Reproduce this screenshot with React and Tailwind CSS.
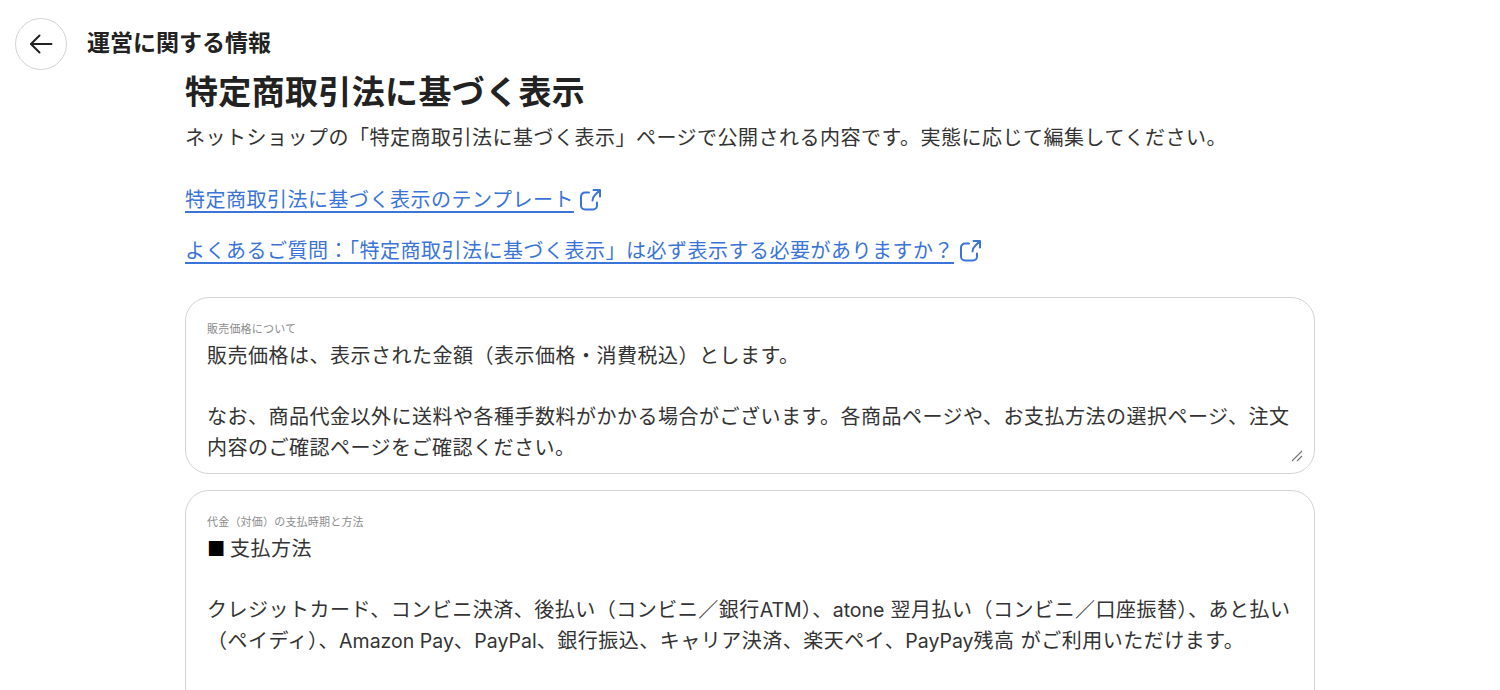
import React from 'react';

const BackArrow = () => (
  <svg width="24" height="20" viewBox="0 0 24 20" fill="none" stroke="currentColor" strokeWidth="2" strokeLinecap="round" strokeLinejoin="round">
    <path d="M22.5 10H2" />
    <path d="M10.5 1.5 2 10l8.5 8.5" />
  </svg>
);

const ExternalIcon = () => (
  <svg width="24" height="24" viewBox="0 0 24 24" fill="none" stroke="currentColor" strokeWidth="2" strokeLinecap="round" strokeLinejoin="round" className="ml-[4px] shrink-0">
    <path d="M11 4.5H7a4 4 0 0 0-4 4v9a4 4 0 0 0 4 4h8a4 4 0 0 0 4-4v-3" />
    <path d="M22 2h-6.5M22 2v6.5M22 2l-5 5a8 8 0 0 0-2.5 5.5" />
  </svg>
);

const DocLink = ({ children }) => (
  <a className="flex items-center text-[20px] leading-[24px] tracking-[0.5px] text-[#3b74d8]">
    <span className="underline underline-offset-[4px] decoration-[1.5px]">{children}</span>
    <ExternalIcon />
  </a>
);

const Latin = ({ children }) => <span className="text-[19.5px] tracking-normal">{children}</span>;

const Field = ({ label, height, resizable, children }) => (
  <div className={`relative rounded-[24px] border border-[#d4d4d4] bg-white pl-[21px] pr-[20px] pt-[23px] ${height}`}>
    <div className="mb-[4px] text-[11px] leading-[16px] tracking-[0.2px] text-[#8c8c8c]">{label}</div>
    <div className="text-[20px] leading-[30.5px] tracking-[0.5px] text-[#333] whitespace-pre-line">{children}</div>
    {resizable && (
      <svg width="12" height="12" viewBox="0 0 12 12" className="absolute right-[11px] bottom-[11px] text-[#777]" stroke="currentColor" fill="none" strokeWidth="1.2">
        <path d="M1 11 11 1M6 11l5-5" />
      </svg>
    )}
  </div>
);

export default function App() {
  return (
    <div className="h-[690px] overflow-hidden bg-white font-['Inter','Noto_Sans_CJK_JP',sans-serif]">
      <header className="flex items-center pl-[15px] pt-[18px]">
        <button className="flex h-[52px] w-[52px] items-center justify-center rounded-full border border-[#d4d4d4] text-[#222]">
          <BackArrow />
        </button>
        <h2 className="ml-[20px] mt-[-2px] text-[23px] font-bold leading-[32px] text-[#222]">運営に関する情報</h2>
      </header>
      <main className="ml-[185px] w-[1130px]">
        <h1 className="text-[33px] font-bold leading-[44px] tracking-[0.35px] text-[#222]">特定商取引法に基づく表示</h1>
        <p className="mt-[9px] text-[20px] leading-[30px] tracking-[0.5px] text-[#333]">
          ネットショップの「特定商取引法に基づく表示」ページで公開される内容です。実態に応じて編集してください。
        </p>
        <div className="mt-[35px] flex flex-col gap-[27px]">
          <DocLink>特定商取引法に基づく表示のテンプレート</DocLink>
          <DocLink>よくあるご質問：「特定商取引法に基づく表示」は必ず表示する必要がありますか？</DocLink>
        </div>
        <div className="mt-[34px] flex flex-col gap-[16px]">
          <Field label="販売価格について" height="h-[177px]" resizable>
            {'販売価格は、表示された金額（表示価格・消費税込）とします。\n\nなお、商品代金以外に送料や各種手数料がかかる場合がございます。各商品ページや、お支払方法の選択ページ、注文内容のご確認ページをご確認ください。'}
          </Field>
          <Field label="代金（対価）の支払時期と方法" height="h-[300px]">
            <span className="text-black">■</span>
            <span className="ml-[-2px]">{' 支払方法'}</span>
            <br />
            <br />
            {'クレジットカード、コンビニ決済、後払い（コンビニ／銀行'}
            <Latin>ATM</Latin>
            {'）、'}
            <Latin>atone</Latin>
            {' 翌月払い（コンビニ／口座振替）、あと払い'}
            <br />
            {'（ペイディ）、'}
            <Latin>Amazon Pay</Latin>
            {'、'}
            <Latin>PayPal</Latin>
            {'、銀行振込、キャリア決済、楽天ペイ、'}
            <Latin>PayPay</Latin>
            {'残高 がご利用いただけます。'}
          </Field>
        </div>
      </main>
    </div>
  );
}
